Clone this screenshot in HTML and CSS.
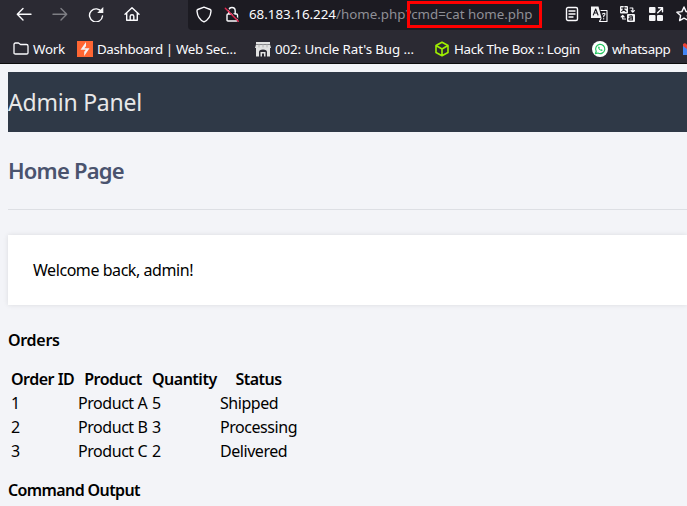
FILE: index.html
```html
<!DOCTYPE html>
<html lang="en">
<head>
<meta charset="utf-8">
<title>Admin Panel</title>
<link rel="stylesheet" href="styles.css">
</head>
<body>
<div class="browser">
  <div class="toolbar">
    <div class="nav">
      <svg width="16" height="16" viewBox="0 0 16 16"><path d="M15 8.3H1.5M7 2.5L1.3 8.3 7 14"/></svg>
      <svg class="dim" width="16" height="16" viewBox="0 0 16 16"><path d="M1 8.3h13.5M9 2.5l5.7 5.8L9 14"/></svg>
      <svg width="16" height="16" viewBox="0 0 16 16"><path d="M13.7 6.2A6.5 6.5 0 1 0 14.5 10"/><path class="fill" d="M15.3 1v6H9.2z"/></svg>
      <svg width="16" height="16" viewBox="0 0 16 16"><path d="M1 8.2L8 1.7l7 6.5M2.7 7v7.2h10.6V7M6.2 14V10.2q0-1.4 1.8-1.4t1.8 1.4V14"/></svg>
    </div>
    <div class="urlbar">
      <svg class="shield" width="16" height="17" viewBox="0 0 16 17"><path d="M8 1.1L14.2 3.5q1 .5.8 1.7Q14.300 13 8 15.900 1.700 13 1 5.200.8 4 1.800 3.500z"/></svg>
      <svg class="lock" width="16" height="17" viewBox="0 0 16 17"><path d="M4.800 7.500V5Q4.800 1.500 8 1.500t3.200 3.500v2.500M4 8h8.500q1 0 1 1v5q0 1-1 1H4q-1 0-1-1V9q0-1 1-1z"/><path class="gap" d="M2.500 1.300l13 13"/><path class="slash" d="M1.300 2.300l13 13"/></svg>
      <div class="url"><span class="host">68.183.16.224</span><span class="path">/home.php?</span><span class="query">cmd=cat home.php</span><i class="mark"></i></div>
      <div class="actions">
        <svg width="14" height="16" viewBox="0 0 14 16"><rect x="1.500" y="1.500" width="11" height="13" rx="1.500"/><path d="M4 5h6M4 8h6M4 11h4"/></svg>
        <svg width="17" height="17" viewBox="0 0 17 17"><path class="fill" d="M0 .5h7.500l3 11.500H0z"/><path class="ink" d="M2.300 9L4.700 3 7 9M3.200 7h3"/><path class="thin" d="M10 4.500h6v11H8.500l1.500-3"/><path class="thin" d="M11.500 8q2-1.500 2.500 0 0 1.200-1.300 1.700v1M12.700 12.500v.5"/></svg>
        <svg width="16" height="16" viewBox="0 0 16 16"><rect class="fill" x="0" y="0" width="8" height="7.500" rx="1"/><path class="ink" d="M1.500 2h5M4 .8V2q-.5 2.500-2.300 3.500M3 3l3 2.500"/><rect class="fill" x="7" y="8" width="8" height="8" rx="1"/><path class="ink" d="M9.200 10.200q3-1 3.200.8v3h-2q-1.700 0-1.500-1.200t3.500-.8"/><path class="thin" d="M10 2h2.800v4M11.200 4.600l1.600 1.600 1.600-1.600M5.500 13H2.700V9.600M1.200 11l1.500-1.600L4.200 11"/></svg>
        <svg width="16" height="16" viewBox="0 0 16 16"><g class="fill"><rect x="1" y="1" width="6.500" height="6" rx="1"/><rect x="1" y="9" width="6.500" height="6" rx="1"/><rect x="9" y="9" width="6" height="6" rx="1"/></g><path d="M9.700 6.700l4.300-4.300M10.500 1.700h4v4"/></svg>
        <svg width="16" height="16" viewBox="0 0 16 16"><path d="M8 1l2.100 4.600 5 .6-3.700 3.400 1 5L8 12.100l-4.400 2.500 1-5L.9 6.200l5-.6z"/></svg>
      </div>
    </div>
  </div>
  <div class="bookmarks">
    <div class="bm work"><svg width="16" height="16" viewBox="0 0 16 16"><path d="M1 12v-8.500q0-1.500 1.500-1.500h3L7.500 3.500h6q1.500 0 1.500 1.500v7q0 1-1.500 1h-11Q1 13 1 12z"/></svg><span>Work</span></div>
    <div class="bm dash"><svg width="16" height="16" viewBox="0 0 16 16"><rect width="16" height="16" fill="#ff6633" stroke="none"/><path class="fill" d="M9 1v4.300L7.300 7.200h5.200L7.200 15v-4.200l1.700-2H3.500z"/></svg><span>Dashboard | Web Sec…</span></div>
    <div class="bm rat"><svg width="16" height="16" viewBox="0 0 16 16"><path class="stone" d="M1 1h14v2H1zM1 3.500h14L16 7H0zM1 7h14v8.500h-3V11q0-2.500-4-2.500t-4 2.500v4.500H1z"/><path d="M4 3.500v2.500M8 3.500v2.500M12 3.500v2.500" stroke="#aaa" stroke-width=".8"/><path class="stone" d="M5.500 11h5v4.500H9v-3H7v3H5.500z"/></svg><span>002: Uncle Rat's Bug …</span></div>
    <div class="bm htb"><svg width="16" height="16" viewBox="0 0 16 16"><path class="cube" d="M8 1.200l6 3.300v7L8 14.800l-6-3.300v-7zM2 4.500L8 8l6-3.500M8 8v6.500"/></svg><span>Hack The Box :: Login</span></div>
    <div class="bm wa"><svg width="16" height="16" viewBox="0 0 16 16"><circle cx="8" cy="8" r="8" fill="#fff" stroke="none"/><path d="M3.400 12.700l.8-2.500A4.600 4.600 0 1 1 6 12z" fill="none" stroke="#25c760" stroke-width="1.200"/><path d="M6.200 5.700q-.5 1.300.8 2.700t3 1.600l.7-1-1.300-.8-.7.500-1.300-1.300.4-.8-.7-1.200z" fill="#25c760" stroke="none"/></svg><span>whatsapp</span></div>
    <div class="bm mail"><svg width="16" height="16" viewBox="0 0 16 16"><path d="M0 5h4v9H0z" fill="#4285f4" stroke="none"/><path d="M0 5V3l2-1 6 5v4z" fill="#ea4335" stroke="none"/></svg></div>
  </div>
</div>
<main class="page">
  <header class="banner">Admin Panel</header>
  <h2>Home Page</h2>
  <section class="welcome">Welcome back, admin!</section>
  <h4 class="orders">Orders</h4>
  <table>
    <colgroup><col class="c1"><col class="c2"><col class="c3"><col class="c4"></colgroup>
    <tr><th>Order ID</th><th>Product</th><th>Quantity</th><th>Status</th></tr>
    <tr><td>1</td><td>Product A</td><td>5</td><td>Shipped</td></tr>
    <tr><td>2</td><td>Product B</td><td>3</td><td>Processing</td></tr>
    <tr><td>3</td><td>Product C</td><td>2</td><td>Delivered</td></tr>
  </table>
  <h4 class="output">Command Output</h4>
</main>
</body>
</html>
```
FILE: styles.css
```css
* { box-sizing: border-box; }
html, body { margin: 0; height: 506px; overflow: hidden; }
body { background: #f3f4f8; color: #000; font-family: "Noto Sans", sans-serif; font-size: 16px; }
.browser { height: 64px; background: #2b2a33; border-bottom: 1px solid #0c0c0d; color: #fbfbfe; font-size: 13.33px; overflow: hidden; }
svg { display: block; flex: none; fill: none; stroke: #fbfbfe; stroke-width: 1.4; stroke-linecap: round; stroke-linejoin: round; }
.fill { fill: #f4f4f6; stroke: none; }
.ink { stroke: #1c1b22; stroke-width: 1.1; }
.thin { stroke-width: 1.1; }
.stone { fill: #e2e2e2; stroke: none; }
.cube { stroke: #9fef00; stroke-width: 1.6; }
.gap { stroke: #1c1b22; stroke-width: 1.2; }
.slash { stroke: #e22850; stroke-width: 1.4; }
.dim { opacity: .4; }
.toolbar { display: flex; height: 30px; }
.nav { display: flex; gap: 20px; width: 188px; padding: 6px 0 0 16px; flex: none; }
.urlbar { display: flex; width: 530px; flex: none; background: #1c1b22; border-radius: 0 0 0 4px; padding-left: 8px; }
.shield { margin-top: 6px; }
.lock { margin: 6px 0 0 12px; }
.url { position: relative; margin-left: 9px; width: 316px; line-height: 28px; white-space: pre; }
.path, .query { color: #8f8f96; }
.mark { position: absolute; left: 158px; top: 1px; width: 135px; height: 27px; border: 3px solid #f00; }
.actions { display: flex; gap: 12px; padding-top: 6px; }
.bookmarks { display: flex; height: 33px; align-items: center; padding: 5px 0 0 13px; }
.bm { display: flex; align-items: center; gap: 4px; flex: none; white-space: nowrap; line-height: 20px; }
.bm svg { stroke-width: 1.3; }
.work { width: 64px; letter-spacing: -.25px; }
.dash { width: 178px; letter-spacing: -.36px; }
.rat { width: 179px; letter-spacing: -.1px; }
.htb { width: 158px; letter-spacing: -.36px; }
.wa { width: 91px; letter-spacing: -.35px; }
.page { display: flex; flex-direction: column; padding: 8px 0 0 8px; }
.banner { height: 60px; background: #2f3947; color: #e8e8e8; font-size: 23px; line-height: 60px; letter-spacing: -.22px; }
h2 { margin: 0; height: 78px; border-bottom: 1px solid #dddfe4; color: #4a536e; font-size: 22px; line-height: 77px; font-weight: 600; letter-spacing: -.8px; }
.welcome { margin-top: 25px; height: 70px; background: #fff; padding-left: 25px; line-height: 71px; box-shadow: 0 0 5px rgba(0,0,0,.1); letter-spacing: -.44px; }
h4 { margin: 0; font-size: 16px; line-height: 24px; font-weight: 600; letter-spacing: -.62px; }
.orders { margin-top: 23px; letter-spacing: -.3px; }
table { table-layout: fixed; width: 292px; margin-top: 15px; border-spacing: 2px 0; white-space: nowrap; letter-spacing: -.45px; }
th, td { padding: 0 1px; height: 24px; line-height: 24px; text-align: left; }
th { text-align: center; font-weight: 600; letter-spacing: -.5px; }
.c1 { width: 65px; }
.c2 { width: 72px; }
.c3 { width: 66px; }
.c4 { width: 79px; }
.output { margin-top: 15px; }
```
